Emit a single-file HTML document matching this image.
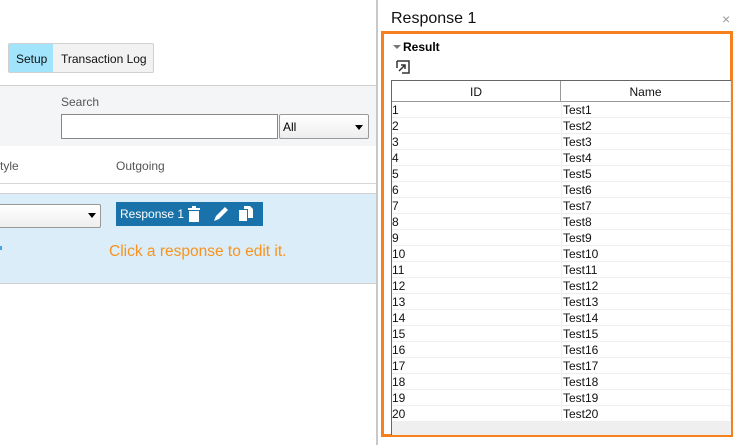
<!DOCTYPE html>
<html><head><style>
body{margin:0;width:739px;height:445px;position:relative;overflow:hidden;background:#fff;font-family:"Segoe UI","Liberation Sans",sans-serif;}
.a{position:absolute;}
.t{font-size:12px;}
table{border-collapse:collapse;}
.r{display:flex;border-bottom:1px solid #eee;height:15px}
.r span:first-child{width:169px;border-right:1px solid #eee}
.r span+span{padding-left:1px}
</style></head><body>
<div class="a" style="left:8px;top:43px;width:144px;height:28px;border:1px solid #d0d0d0;border-radius:2px;background:#f2f2f2"></div>
<div class="a" style="left:9px;top:44px;width:44px;height:28px;background:#a1e4fb"></div>
<div class="a t" style="left:16px;top:52px;color:#111">Setup</div>
<div class="a t" style="left:61px;top:52px;color:#111">Transaction Log</div>
<div class="a" style="left:0;top:85px;width:377px;height:1px;background:#d0d0d0"></div>
<div class="a" style="left:0;top:86px;width:377px;height:60px;background:#f4f5f7"></div>
<div class="a t" style="left:61px;top:95px;color:#555">Search</div>
<div class="a" style="left:61px;top:114px;width:215px;height:23px;border:1px solid #888;background:#fff"></div>
<div class="a" style="left:279px;top:114px;width:88px;height:23px;border:1px solid #999;border-radius:2px;background:linear-gradient(#fff,#eee)"></div>
<div class="a t" style="left:283px;top:120px;color:#000">All</div>
<div class="a" style="left:355px;top:125px;border-left:4px solid transparent;border-right:4px solid transparent;border-top:5px solid #000"></div>
<div class="a t" style="left:0;top:159px;color:#555">tyle</div>
<div class="a t" style="left:116px;top:159px;color:#555">Outgoing</div>
<div class="a" style="left:0;top:183px;width:377px;height:1px;background:#d8d8d8"></div>
<div class="a" style="left:0;top:193px;width:377px;height:1px;background:#d0d0d0"></div>
<div class="a" style="left:0;top:194px;width:377px;height:89px;background:#dbedf8"></div>
<div class="a" style="left:0;top:283px;width:377px;height:1px;background:#d0d0d0"></div>
<div class="a" style="left:-3px;top:204px;width:102px;height:22px;border:1px solid #999;border-radius:2px;background:linear-gradient(#fff,#eee)"></div>
<div class="a" style="left:88px;top:213px;border-left:4px solid transparent;border-right:4px solid transparent;border-top:5px solid #000"></div>
<div class="a" style="left:116px;top:202px;width:147px;height:24px;background:#1a72aa"></div>
<div class="a t" style="left:120px;top:207px;color:#fff">Response 1</div>
<svg class="a" style="left:186px;top:205px" width="80" height="18">
<rect x="2" y="3" width="12" height="2" fill="#fff"/><rect x="6" y="1" width="4" height="2" fill="#fff"/><rect x="3" y="6" width="10" height="11" fill="#fff"/>
<path d="M28 16l2-5 9-9 3 3-9 9z" fill="#fff"/>
<rect x="53" y="5" width="8" height="11" fill="#fff"/><path d="M58 1h6l3 3v9h-5V4h-4z" fill="#fff"/>
</svg>
<div class="a" style="left:109px;top:243px;font-size:15.5px;color:#f7931e">Click a response to edit it.</div>
<div class="a" style="left:0;top:246px;width:2px;height:4px;background:#4aa3df"></div>
<div class="a" style="left:376px;top:0;width:2px;height:445px;background:#c8c8c8"></div>
<div class="a" style="left:391px;top:10px;font-size:16px;color:#111">Response 1</div>
<div class="a" style="left:722px;top:11px;font-size:14px;color:#999">×</div>
<div class="a" style="left:381px;top:31px;width:346px;height:400px;border:3px solid #f7801e"></div>
<div class="a" style="left:393px;top:45px;border-left:4px solid transparent;border-right:4px solid transparent;border-top:4px solid #777"></div>
<div class="a" style="left:403px;top:40px;font-size:12px;font-weight:bold;color:#000">Result</div>
<svg class="a" style="left:396px;top:60px" width="14" height="14"><path d="M1 1h12v12H6M1 1v7" fill="none" stroke="#333" stroke-width="1.5"/><path d="M3 11l6-6M5 5h4v4" fill="none" stroke="#333" stroke-width="1.5"/></svg>
<div class="a" style="left:391px;top:80px;width:339px;height:354px;background:#efefef;border-left:1px solid #666;border-top:1px solid #666"></div>
<table class="a t" style="left:392px;top:81px;width:338px;color:#111">
<tr style="height:20px;background:#fff"><td style="width:168px;text-align:center;border-right:1px solid #999;border-bottom:1px solid #999;padding:2px 0 0">ID</td><td style="text-align:center;border-bottom:1px solid #999;padding:2px 0 0">Name</td></tr>
</table>
<div class="a t" style="left:392px;top:102px;width:338px;line-height:16px;color:#111;background:#fff">
<div class="r"><span>1</span><span>Test1</span></div>
<div class="r"><span>2</span><span>Test2</span></div>
<div class="r"><span>3</span><span>Test3</span></div>
<div class="r"><span>4</span><span>Test4</span></div>
<div class="r"><span>5</span><span>Test5</span></div>
<div class="r"><span>6</span><span>Test6</span></div>
<div class="r"><span>7</span><span>Test7</span></div>
<div class="r"><span>8</span><span>Test8</span></div>
<div class="r"><span>9</span><span>Test9</span></div>
<div class="r"><span>10</span><span>Test10</span></div>
<div class="r"><span>11</span><span>Test11</span></div>
<div class="r"><span>12</span><span>Test12</span></div>
<div class="r"><span>13</span><span>Test13</span></div>
<div class="r"><span>14</span><span>Test14</span></div>
<div class="r"><span>15</span><span>Test15</span></div>
<div class="r"><span>16</span><span>Test16</span></div>
<div class="r"><span>17</span><span>Test17</span></div>
<div class="r"><span>18</span><span>Test18</span></div>
<div class="r"><span>19</span><span>Test19</span></div>
<div class="r"><span>20</span><span>Test20</span></div>
</div>
</body></html>
